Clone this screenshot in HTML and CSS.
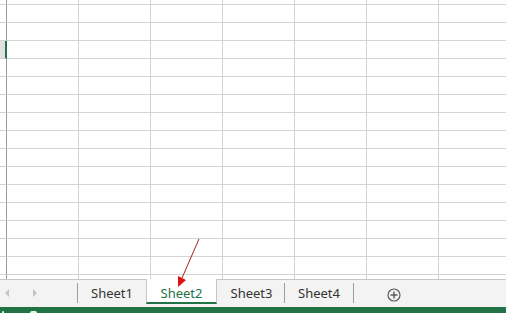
FILE: index.html
```html
<!DOCTYPE html>
<html lang="en">
<head>
    <meta charset="UTF-8">
    <title>Sheet tabs</title>
    <link rel="stylesheet" href="styles.css">
</head>
<body>
    <div class="workbook">
        <!-- cell grid -->
        <div class="sheet" id="sheet"></div>

        <!-- sheet tabs -->
        <div class="tabbar">
            <div class="nav">
                <span class="nav-arrow left"></span>
                <span class="nav-arrow right"></span>
            </div>
            <div class="tabs">
                <div class="tab">Sheet1</div>
                <div class="tab active">Sheet2</div>
                <div class="tab">Sheet3</div>
                <div class="tab last">Sheet4</div>
            </div>
            <div class="add-sheet">
                <svg width="14" height="14" viewBox="0 0 14 14">
                    <circle cx="7" cy="7" r="6" fill="none" stroke="#5a5a5a" stroke-width="1.2"/>
                    <path d="M7 3.5 V10.5 M3.5 7 H10.5" stroke="#5a5a5a" stroke-width="1.4"/>
                </svg>
            </div>
        </div>

        <!-- status bar, mostly cut off at the window edge -->
        <div class="statusbar">
            <span class="status-mark small"></span>
            <span class="status-mark wide"></span>
        </div>

        <!-- annotation arrow -->
        <svg class="annotation" width="506" height="313" viewBox="0 0 506 313">
            <line x1="199" y1="239" x2="182" y2="278" stroke="#a82020" stroke-width="1"/>
            <polygon points="178,287 178,276 186,280" fill="#e01010"/>
        </svg>
    </div>

    <script>
        // build the grid rows
        const sheet = document.getElementById("sheet");
        const rows = 17;
        const cols = 7;
        for (let r = 0; r < rows; r++) {
            const head = document.createElement("div");
            head.className = "row-head" + (r === 3 ? " selected" : "");
            sheet.appendChild(head);
            for (let c = 0; c < cols; c++) {
                const cell = document.createElement("div");
                cell.className = "cell";
                sheet.appendChild(cell);
            }
        }
    </script>
</body>
</html>
```

FILE: styles.css
```css
/* page */
body {
    margin: 0;
    font-family: 'Noto Sans', sans-serif;
    background: #ffffff;
    overflow: hidden;
}

.workbook {
    position: relative;
    width: 506px;
    height: 313px;
    display: flex;
    flex-direction: column;
}

/* grid */
.sheet {
    height: 279px;
    overflow: hidden;
    display: grid;
    grid-template-columns: 7px repeat(7, 72px);
    grid-template-rows: 5px repeat(16, 18px);
}

.cell {
    box-sizing: border-box;
    border-right: 1px solid #d4d4d4;
    border-bottom: 1px solid #d4d4d4;
}

.row-head {
    box-sizing: border-box;
    border-right: 1px solid #9b9b9b;
    border-bottom: 1px solid #d4d4d4;
}

.row-head.selected {
    background: #e1e1e1;
    border-right: 2px solid #217346;
}

/* tabs */
.tabbar {
    height: 28px;
    box-sizing: border-box;
    background: #f3f3f3;
    border-top: 1px solid #c6c6c6;
    display: flex;
    align-items: flex-start;
}

.nav {
    width: 78px;
    height: 20px;
    margin-top: 3px;
    box-sizing: border-box;
    border-right: 1px solid #9d9d9d;
    display: flex;
    align-items: center;
    gap: 24px;
    padding-left: 5px;
}

.nav-arrow {
    width: 0;
    height: 0;
    border-top: 4px solid transparent;
    border-bottom: 4px solid transparent;
}

.nav-arrow.left {
    border-right: 4px solid #c4c4c4;
}

.nav-arrow.right {
    border-left: 4px solid #c4c4c4;
}

.tabs {
    display: flex;
}

.tab {
    width: 68px;
    height: 20px;
    margin-top: 3px;
    box-sizing: border-box;
    text-align: center;
    font-size: 13px;
    line-height: 20px;
    color: #333333;
    border-right: 1px solid #9d9d9d;
}

.tab:first-child {
    border-right: none;
}

.tab.active {
    width: 71px;
    height: 25px;
    margin-top: -1px;
    padding-top: 4px;
    background: #ffffff;
    color: #217346;
    border-left: 1px solid #c6c6c6;
    border-right: 1px solid #c6c6c6;
    border-bottom: 2px solid #217346;
}

.tab.active + .tab {
    padding-left: 2px;
}

.tab.last {
    width: 69px;
}

.add-sheet {
    margin-left: 33px;
    margin-top: 5px;
    height: 14px;
}

/* status bar */
.statusbar {
    height: 6px;
    background: #217346;
    display: flex;
    align-items: flex-end;
    padding-left: 2px;
}

.status-mark {
    height: 2px;
    background: #e8f2ec;
    border-radius: 2px 2px 0 0;
}

.status-mark.small {
    width: 2px;
}

.status-mark.wide {
    width: 7px;
    margin-left: 26px;
}

/* annotation */
.annotation {
    position: absolute;
    left: 0;
    top: 0;
    pointer-events: none;
}
```
